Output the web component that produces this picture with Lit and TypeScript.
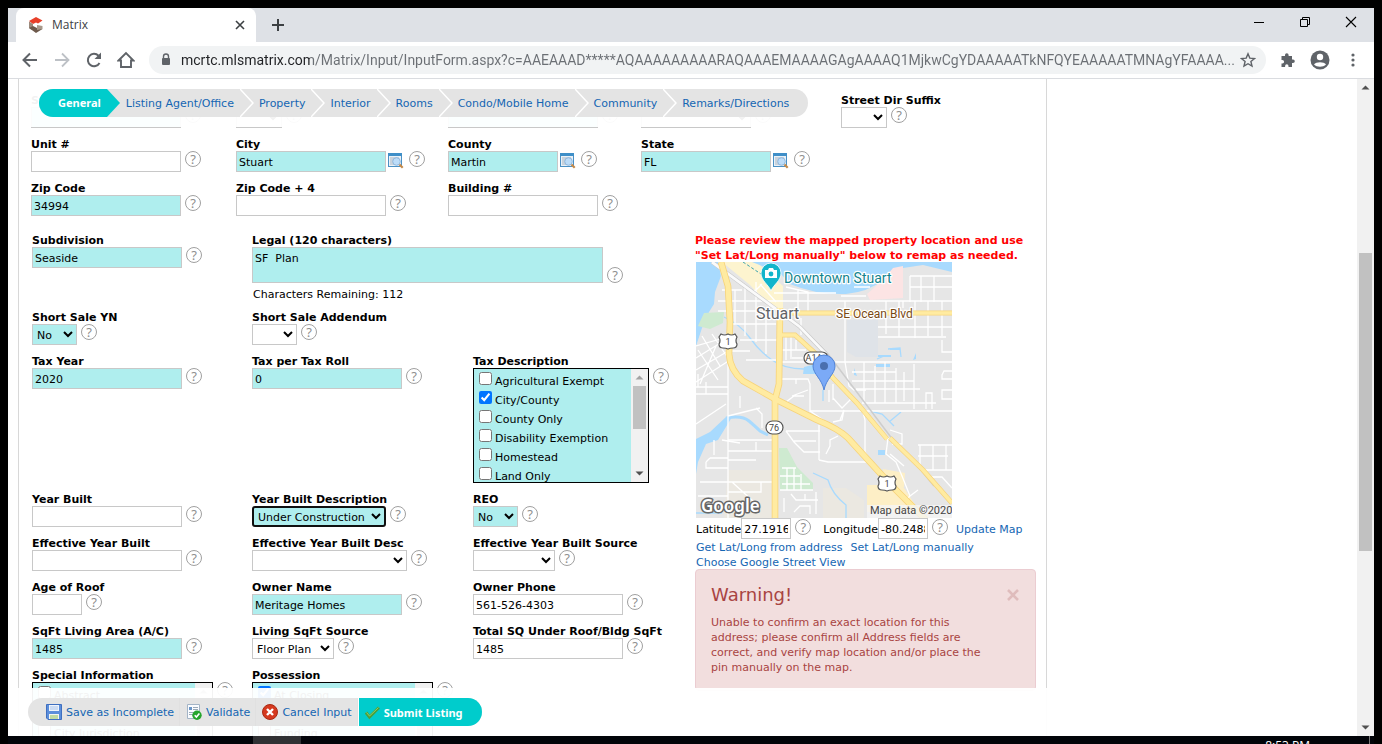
import { LitElement, html, svg, css, nothing } from "lit";
import { customElement, property } from "lit/decorators.js";
import { classMap } from "lit/directives/class-map.js";
import { styleMap } from "lit/directives/style-map.js";

type Field = {
  id: string;
  label: string;
  kind?: "text" | "select" | "area" | "list";
  value?: string;
  width: number;
  filled?: boolean;
  lookup?: boolean;
  active?: boolean;
  wide?: boolean;
  note?: string;
  items?: [string, boolean][];
};

const ADDRESS_ROWS: (Field | null)[][] = [
  [
    { id: "street-number", label: "Street Number", width: 150, filled: true },
    { id: "dir-prefix", label: "Street Dir Prefix", kind: "select", width: 46 },
    { id: "street-name", label: "Street Name", width: 150, filled: true },
    { id: "street-suffix", label: "Street Suffix", kind: "select", width: 110 },
    { id: "dir-suffix", label: "Street Dir Suffix", kind: "select", width: 46 },
  ],
  [
    { id: "unit", label: "Unit #", width: 150 },
    { id: "city", label: "City", width: 150, value: "Stuart", filled: true, lookup: true },
    { id: "county", label: "County", width: 110, value: "Martin", filled: true, lookup: true },
    { id: "state", label: "State", width: 130, value: "FL", filled: true, lookup: true },
    null,
  ],
  [
    { id: "zip", label: "Zip Code", width: 150, value: "34994", filled: true },
    { id: "zip4", label: "Zip Code + 4", width: 150 },
    { id: "building", label: "Building #", width: 150 },
    null,
    null,
  ],
];

const DETAIL_ROWS: (Field | null)[][] = [
  [
    { id: "subdivision", label: "Subdivision", width: 150, value: "Seaside", filled: true },
    {
      id: "legal", label: "Legal (120 characters)", kind: "area", width: 351, value: "SF  Plan",
      filled: true, wide: true, note: "Characters Remaining: 112",
    },
  ],
  [
    { id: "short-sale", label: "Short Sale YN", kind: "select", width: 45, value: "No", filled: true },
    { id: "short-addendum", label: "Short Sale Addendum", kind: "select", width: 45 },
    null,
  ],
  [
    { id: "tax-year", label: "Tax Year", width: 150, value: "2020", filled: true },
    { id: "tax-roll", label: "Tax per Tax Roll", width: 150, value: "0", filled: true },
    {
      id: "tax-desc", label: "Tax Description", kind: "list", width: 176,
      items: [
        ["Agricultural Exempt", false], ["City/County", true], ["County Only", false],
        ["Disability Exemption", false], ["Homestead", false], ["Land Only", false],
      ],
    },
  ],
  [
    { id: "year-built", label: "Year Built", width: 150 },
    {
      id: "year-desc", label: "Year Built Description", kind: "select", width: 134,
      value: "Under Construction", filled: true, active: true,
    },
    { id: "reo", label: "REO", kind: "select", width: 45, value: "No", filled: true },
  ],
  [
    { id: "eff-year", label: "Effective Year Built", width: 150 },
    { id: "eff-desc", label: "Effective Year Built Desc", kind: "select", width: 155 },
    { id: "eff-source", label: "Effective Year Built Source", kind: "select", width: 82 },
  ],
  [
    { id: "roof", label: "Age of Roof", width: 50 },
    { id: "owner", label: "Owner Name", width: 150, value: "Meritage Homes", filled: true },
    { id: "phone", label: "Owner Phone", width: 150, value: "561-526-4303" },
  ],
  [
    { id: "sqft", label: "SqFt Living Area (A/C)", width: 150, value: "1485", filled: true },
    { id: "sqft-source", label: "Living SqFt Source", kind: "select", width: 82, value: "Floor Plan" },
    { id: "sqft-total", label: "Total SQ Under Roof/Bldg SqFt", width: 150, value: "1485" },
  ],
  [
    {
      id: "special", label: "Special Information", kind: "list", width: 181,
      items: [["Abstract", false], ["", false], ["City Jurisdiction", false], ["", false]],
    },
    {
      id: "possession", label: "Possession", kind: "list", width: 181,
      items: [["At Closing", true], ["", false], ["Funding", false], ["", false]],
    },
    null,
  ],
];

const SECTIONS = [
  "General", "Listing Agent/Office", "Property", "Interior", "Rooms",
  "Condo/Mobile Home", "Community", "Remarks/Directions",
];

const URL_TEXT =
  "mcrtc.mlsmatrix.com/Matrix/Input/InputForm.aspx?c=AAEAAAD*****AQAAAAAAAAARAQAAAEMAAAAGAgAAAAQ1MjkwCgYDAAAAATkNFQYEAAAAATMNAgYFAAAA...";

@customElement("scroll-track")
class ScrollTrack extends LitElement {
  @property({ type: Number }) before = 0;
  @property({ type: Number }) thumb = 1;
  @property({ type: Number }) after = 1;

  static styles = css`
    :host { display: flex; flex-direction: column; flex: none; width: 17px; background: #f1f1f1; }
    svg { flex: none; width: 17px; height: 17px; fill: #505050; }
    .idle { fill: #a3a3a3; }
    .thumb { background: #c1c1c1; margin: 0 2px; }
  `;

  render() {
    return html`
      <svg class=${this.before ? "" : "idle"} viewBox="0 0 17 17"><path d="M8.500 6.500 12.500 10.500H4.500z" /></svg>
      <div style=${styleMap({ flexGrow: this.before })}></div>
      <div class="thumb" style=${styleMap({ flexGrow: this.thumb })}></div>
      <div style=${styleMap({ flexGrow: this.after })}></div>
      <svg viewBox="0 0 17 17"><path d="M8.500 10.500 12.500 6.500H4.500z" /></svg>
    `;
  }
}

@customElement("property-map")
class PropertyMap extends LitElement {
  static styles = css`
    :host { display: block; }
    svg { display: block; width: 256px; height: 256px; }
    text { font-family: Roboto, sans-serif; }
    .streets path { fill: none; stroke: #fff; stroke-width: 1.3; }
    .casing { fill: none; stroke: #f7d37a; stroke-width: 6.600; }
    .road { fill: none; stroke: #ffeba1; stroke-width: 5; }
    .thin-casing { fill: none; stroke: #f7d37a; stroke-width: 5; }
    .thin { fill: none; stroke: #ffeba1; stroke-width: 3.600; }
    .stream { fill: none; stroke: #a8dafe; stroke-width: 1.300; }
    .halo { paint-order: stroke; stroke: #fff; stroke-width: 2.500; stroke-linejoin: round; }
    .poi { fill: #12858e; font-size: 14px; }
    .town { fill: #5f6368; font-size: 16px; }
    .street { fill: #7a4a12; font-size: 12px; }
    .sign { fill: #444; font-size: 9px; text-anchor: middle; }
    .credit { fill: #444; font-size: 11px; }
    .brand {
      font-family: "Noto Sans", sans-serif; font-weight: 600; font-size: 17px; fill: #fff;
      paint-order: stroke; stroke: #666; stroke-width: 3; stroke-linejoin: round;
    }
  `;

  private main = "M25 0 32 24 34 60 33 92Q34 108 47 119L79 137 121 158Q143 167 152 176L194 222 230 258";
  private sr76 = "M84 46 83 122 79 138V256";
  private a1a = "M84 73H99L121 93 137 116 161 141 191 177M194 176 227 208 256 241";

  render() {
    const shield = (x: number, y: number) => svg`
      <path d="M${x - 7} ${y - 7}q3.500 2 7 0q3.500 2 7 0l2 3q-2 4 0 7q0 4-4 4q-3 0-5 1q-2-1-5-1q-4 0-4-4q2-3 0-7z"
        fill="#fff" stroke="#555" stroke-width="1.200" />
      <text class="sign" x=${x} y=${y + 4}>1</text>`;
    return html`
      <svg viewBox="0 0 256 256" role="img" aria-label="Map of Stuart">
        <rect width="256" height="256" fill="#e6e6e6" />
        <path d="M32 208H77V256H28zM127 226H150L168 238V256H127z" fill="#ebe8e1" />
        <path d="M171 223H206L224 250H171zM187 207 209 211 208 225 190 222z" fill="#fdefc6" />
        <path d="M151 58H182V95H160L151 90z" fill="#dfe3e8" />
        <path d="M26 0H60L87 24V48H77L54 23z" fill="#fdf4cf" />
        <path d="M0 0H22L25 14 19 30 18 42 13 50 6 66 0 84z" fill="#a8dafe" />
        <path d="M56 0 84 11 94 22Q120 33 150 32Q172 30 187 18L207 6 227 3 256 10V0z" fill="#a8dafe" />
        <path d="M171 32 187 18 197 6 207 4V36L174 38z" fill="#fce4e4" />
        <path d="M8 51 28 50 27 61 14 67 2 64z" fill="#ceead0" />
        <path d="M83 186H91L101 205 117 221V228H84z" fill="#ceead0" />
        <path d="M0 177 14 170 30 155 36 155 22 178 10 182 2 200 0 212z" fill="#a8dafe" />
        <path d="M30 156Q46 153 53 159T64 169L72 173" fill="none" stroke="#a8dafe" stroke-width="3" />
        <path d="M108 105 124 101V112L107 112z" fill="#a8dafe" />
        <path class="stream" d="M28 55Q44 62 54 76T76 98Q88 107 108 107M127 128V139M174 149 186 152 198 164M193 160 205 150M117 211 132 218Q136 232 150 243V256M181 97 188 94M192 87 204 86 205 95M0 251H26" />
        <path d="M182 93h13v2h-13zM194 86h10v2h-10zM180 102h14v3h-14zM217 98l3-7v6zM158 106l3 8-3-1zM182 188h7v5h-7z" fill="#a8dafe" />
        <path d="M47 0 65 12 78 10" fill="none" stroke="#3aa2ad" stroke-width="1" stroke-dasharray="3 2" />
        <g class="streets">
          <path d="M26 28H46M22 39H256M22 49H60M36 62H80M44 78H82M34 89H54M50 98H80M39 28V62M49 22V74M60 39V80M70 48V92M60 20V40M58 30 66 22" />
          <path d="M58 28 74 44M64 22 80 40M90 25 112 30V50M102 28V48M78 31H140M90 73V98M96 96H110M105 56V73M95 73V97M84 88H110M100 78V88" />
          <path d="M0 84 28 76M0 96 26 80M0 108 34 88M0 120 34 98M6 74 24 104M2 88 22 118M16 72 32 96M4 122 20 84" />
          <path d="M149 39V100L153 124 158 128H170M158 25H174M145 34H170M214 14V40M225 14V40M238 14V40M214 14H256M214 25H256M207 46V39M190 39V72M203 39V75M219 39V76M232 39V74M246 39V74" />
          <path d="M182 65H256M182 75H250M84 100H256M156 110H200M156 119H218M160 127H224M166 141H240M114 149H256M168 100V141M179 104V141M189 100V141M200 106V141M208 110V139M218 102V147" />
          <path d="M256 109H248L246 113V117H256M256 128H246V137H256M230 147V131H236V147M246 78V90H256M137 136 146 146 156 136M133 128V140M137 122V138" />
          <path d="M32 92V256M0 125H32M0 132H32M2 125V112M10 132V120M0 162 30 142M44 134V146M32 154 64 146M60 146 66 152V166M32 178H77M32 189H78M18 193V178M60 180V189" />
          <path d="M26 178 44 181M14 196H32M10 200 14 196M10 200V206H32M4 220H77M32 230H65V220M36 220 58 240M2 234H32M32 198H60" />
          <path d="M84 117H112L114 122V150M90 140 98 134H108M100 122V117M96 134 112 128M114 149 130 160M123 163V198M90 169H124M90 169 98 180 108 190H124M98 179H120M130 192 134 184V178L142 174M123 198 132 200H170" />
          <path d="M167 150 169 158V190L174 198M137 160 146 158 148 148 144 158M86 206H100M84 214H104M86 222H114M91 206V228M98 206V228M105 212V228M84 228H117M95 232 100 238H122M88 236V250M109 238V232M120 230V252M98 250 104 244H114V252" />
          <path d="M192 176 190 192 200 200 206 214 214 234M194 168 206 172V182H196M222 183H256M222 194H252M224 208H256M224 183V208M237 183V208M250 183V208M194 192 208 204M236 215H246L256 226M214 234 208 240M214 234 222 228" />
        </g>
        <path d="M104 64 132 92 194 174 224 207 238 224" fill="none" stroke="#cdcdcd" stroke-width="1.500" />
        <path d="M16 0 84 50 104 65 130 92" fill="none" stroke="#c9c9c9" stroke-width="4" />
        <path d="M16 0 84 50 104 65 130 92" fill="none" stroke="#fafafa" stroke-width="2.800" />
        <path class="thin-casing" d="M85 51H256" />
        <path class="thin-casing" d=${this.a1a} />
        <path class="casing" d=${this.sr76} />
        <path class="casing" d=${this.main} />
        <path class="thin" d="M85 51H256" />
        <path class="thin" d=${this.a1a} />
        <path class="road" d=${this.sr76} />
        <path class="road" d=${this.main} />
        ${shield(32, 79)} ${shield(191, 221)}
        <rect x="70" y="159" width="17" height="13" rx="6.500" fill="#fff" stroke="#555" stroke-width="1.200" />
        <text class="sign" x="78" y="169">76</text>
        <rect x="108" y="90" width="24" height="12" rx="6" fill="#fff" stroke="#555" stroke-width="1.200" />
        <text class="sign" x="118" y="99">A1A</text>
        <path d="M75 29C73 23 65 19 65 11a10 10 0 0 1 20 0C85 19 77 23 75 29z" fill="#12b5cb" stroke="#fff" stroke-width=".8" />
        <path d="M69 8h3l1-2h4l1 2h3v8H69z" fill="#fff" /><circle cx="75" cy="12" r="2.400" fill="#12b5cb" />
        <path d="M128 128C126 117 117 112 117 104a11 11 0 0 1 22 0C139 112 130 117 128 128z" fill="#7baaf7" stroke="#5184d8" stroke-width="1" />
        <circle cx="128" cy="104" r="4" fill="#4a6fae" />
        <text class="poi halo" x="88" y="21">Downtown Stuart</text>
        <text class="town halo" x="60" y="57">Stuart</text>
        <text class="street halo" x="140" y="56">SE Ocean Blvd</text>
        <rect x="171" y="243" width="85" height="13" fill="#f5f5f5" opacity=".8" />
        <text class="credit" x="174" y="252">Map data ©2020</text>
        <text class="brand" x="5" y="250">Google</text>
      </svg>
    `;
  }
}

@customElement("app-root")
class AppRoot extends LitElement {
  static styles = css`
    :host {
      display: flex; flex-direction: column; box-sizing: border-box; height: 100vh;
      padding: 8px 8px 0; background: #000; color: #000;
      font: 11px/14px "DejaVu Sans", sans-serif;
    }
    *, *::before { box-sizing: border-box; }
    button { font: inherit; color: inherit; background: none; border: 0; padding: 0; }
    a { color: #1566b3; text-decoration: none; }
    svg { display: block; flex: none; }

    .window { flex: 1; min-height: 0; display: flex; flex-direction: column; background: #fff; }
    .tabs { display: flex; align-items: stretch; height: 34px; padding-left: 8px; background: #dee1e6; }
    .tab {
      display: flex; align-items: center; width: 240px; padding: 0 11px 0 12px; gap: 8px;
      background: #fff; border-radius: 8px 8px 0 0; color: #3c4043; font: 12px/16px "Open Sans", sans-serif;
    }
    .tab-title { flex: 1; }
    .new-tab { padding: 0 15px; }
    .controls { display: flex; align-items: center; gap: 34px; margin-left: auto; padding: 0 17px 6px 0; }

    .toolbar {
      display: flex; align-items: center; height: 37px; padding: 0 12px 0 13px; gap: 14px;
      border-bottom: 1px solid #dadce0;
    }
    .toolbar button { flex: none; }
    .address {
      flex: 1; min-width: 0; display: flex; align-items: center; height: 28px; gap: 8px;
      padding: 0 10px 0 10px; border-radius: 14px; background: #f1f3f4;
    }
    .address input {
      flex: 1; min-width: 0; margin-right: -8px; border: 0; padding: 0; outline: 0;
      font: 14px/20px Roboto, sans-serif; color: transparent;
      background: linear-gradient(90deg, #202124 129px, #6b6f74 129px); background-clip: text;
      -webkit-background-clip: text;
    }
    .tools { display: flex; align-items: center; gap: 14px; }

    .body { flex: 1; min-height: 0; display: flex; }
    .view { flex: 1; min-width: 0; position: relative; overflow: hidden; padding-left: 10px; }
    .panel {
      max-width: 1029px; padding: 14px 10px 0 12px;
      border: solid #d8d8d8; border-width: 0 1px;
    }

    .overlay { position: absolute; background: rgba(255, 255, 255, 0.95); }
    .overlay-top { top: 0; left: 20px; padding: 10px 11px; }
    .overlay-bottom { left: 0; right: 0; bottom: 0; padding: 10px 20px; }
    .strong { font-family: "Noto Sans", sans-serif; font-weight: bold; color: #fff; line-height: 27px; }
    .steps { display: flex; height: 28px; border-radius: 14px; overflow: hidden; background: #e4e4e4; line-height: 29px; }
    .steps a { display: flex; padding-left: 5px; }
    .steps a:last-child { padding-right: 13px; }
    .steps .step-text { padding-right: 6px; }
    .steps .current { padding-left: 0; }
    .current .step-text { background: #00cccc; padding: 0 6px 0 19px; height: 28px; }
    .chevron { width: 14px; height: 28px; }

    .actions { display: flex; width: max-content; height: 28px; border-radius: 14px; overflow: hidden; background: #e4e4e4; line-height: 29px; }
    .actions button { display: flex; align-items: center; gap: 4px; padding: 0 5px 0 6px; color: #1566b3; border-right: 1px solid #e0e0e0; }
    .actions button:first-child { padding-left: 18px; }
    .actions .submit { background: #00cccc; color: #fff; padding: 0 19px 0 6px; border: 0; border-left: 1px solid #fff; line-height: 27px; }

    .address-grid { display: grid; grid-template-columns: 205px 212px 193px 200px 1fr; row-gap: 9px; }
    .details { display: flex; margin-top: 17px; padding-left: 1px; }
    .detail-grid { display: grid; grid-template-columns: 220px 221px 222px; row-gap: 9px; align-content: start; }
    .wide { grid-column: span 2; }

    .caption { display: block; height: 14px; line-height: 16px; font-weight: bold; white-space: nowrap; }
    .line { display: flex; align-items: flex-start; gap: 4px; }
    .line .lookup { margin: 1px 1px 0 -3px; }
    .help {
      flex: none; width: 16px; height: 16px; border: 1px solid #a0a0a0; border-radius: 50%;
      color: #8f8f8f; font: 13px/14px "Noto Sans", sans-serif; text-align: center;
    }
    .help-low { align-self: flex-end; }
    .box {
      flex: none; height: 21px; margin: 0; padding: 1px 2px 0; border: 1px solid #c8c8c8; border-radius: 0;
      background-color: #fff; color: #000; font: inherit; outline: 0;
    }
    select.box { padding: 1px 0 0; }
    textarea.box { height: 36px; padding: 4px 2px; resize: none; overflow: hidden; }
    .filled { background-color: #afeeee; }
    .active { border: 2px solid #101010; border-radius: 3px; }
    .note { padding: 5px 1px 0; height: 18px; }

    .list { display: flex; height: 115px; border: 1px solid #000; background: #afeeee; }
    .options { flex: 1; overflow: hidden; }
    .options label { display: flex; height: 19px; line-height: 25px; white-space: nowrap; }
    .options input { flex: none; width: 13px; height: 13px; margin: 3px 3px 3px 5px; }

    .map-side { width: 341px; line-height: 15px; }
    .map-side property-map { margin-left: 1px; }
    .notice { margin: 0; height: 29px; color: #f00; font-weight: bold; white-space: nowrap; }
    .coords { display: flex; align-items: flex-start; height: 21px; padding-left: 1px; line-height: 23px; }
    .coords .box { width: 50px; }
    .coords .help { margin: 1px 12px 0 4px; }
    .coords .help:last-of-type { margin-right: 8px; }
    .links { display: flex; flex-wrap: wrap; column-gap: 8px; height: 30px; padding: 1px 0 0 1px; }
    .alert {
      padding: 15px 50px 15px 15px; border: 1px solid #ebccd1; border-radius: 4px;
      background: #f2dede; color: #a94442;
    }
    .alert-head { display: flex; align-items: center; justify-content: space-between; margin: 0 -35px 10px 0; }
    .alert h4 { margin: 0; font-weight: normal; font-size: 18px; line-height: 20px; }
    .alert p { margin: 0; }

    .taskbar { display: flex; justify-content: flex-end; height: 8px; overflow: hidden; background: #020409; }
    .thumb { width: 48px; margin-left: 245px; margin-right: auto; background: #303134; }
    .clock { padding: 2px 59px 0 0; margin-right: 4px; border-right: 1px solid #777; color: #fff; font: 12px/16px "Open Sans", sans-serif; }
  `;

  private caption(f: Field) {
    return f.kind === "list"
      ? html`<span class="caption" id=${f.id}>${f.label}</span>`
      : html`<label class="caption" for=${f.id}>${f.label}</label>`;
  }

  private control(f: Field) {
    const cls = classMap({ box: true, filled: !!f.filled, active: !!f.active });
    const size = styleMap({ width: `${f.width}px` });
    switch (f.kind) {
      case "select":
        return html`<select id=${f.id} class=${cls} style=${size}><option>${f.value ?? ""}</option></select>`;
      case "area":
        return html`<textarea id=${f.id} class=${cls} style=${size} .value=${f.value ?? ""}></textarea>`;
      case "list":
        return html`
          <div class="list" role="group" aria-labelledby=${f.id} style=${size}>
            <div class="options">
              ${f.items!.map(([text, on]) => html`<label><input type="checkbox" .checked=${on} />${text}</label>`)}
            </div>
            <scroll-track .before=${0} .thumb=${43} .after=${36}></scroll-track>
          </div>`;
      default:
        return html`<input type="text" id=${f.id} class=${cls} style=${size} .value=${f.value ?? ""} />`;
    }
  }

  private lookup(label: string) {
    return html`
      <button class="lookup" aria-label="Look up ${label}">
        <svg width="17" height="17" viewBox="0 0 17 17">
          <rect x="1.500" y="1.500" width="13" height="13" fill="#e9f1f8" stroke="#4a90c4" />
          <path d="M1 1h14v3H1z" fill="#3f8fc8" />
          <path d="M3 6h9M3 8h3M3 10h3M3 12h4" stroke="#a9b4bf" />
          <circle cx="9.500" cy="9.500" r="3.800" fill="#bcdcf8" stroke="#8fb6dc" />
          <path d="m12.500 12.500 3.200 3.200" stroke="#c58a4a" stroke-width="2.200" />
        </svg>
      </button>`;
  }

  private field(f: Field | null) {
    if (!f) return html`<div></div>`;
    return html`
      <div class=${f.wide ? "wide" : ""}>
        ${this.caption(f)}
        <div class="line">
          ${this.control(f)} ${f.lookup ? this.lookup(f.label) : nothing}
          <button class=${classMap({ help: true, "help-low": f.kind === "area" })} aria-label="Help: ${f.label}">?</button>
        </div>
        ${f.note ? html`<div class="note">${f.note}</div>` : nothing}
      </div>`;
  }

  private chrome() {
    return html`
      <div class="tabs">
        <div class="tab">
          <svg width="16" height="16" viewBox="0 0 16 16">
            <path d="M1 4 8 0l6.500 3.500L10 6.500 8 5.500 5 7z" fill="#e8402a" />
            <path d="M1 4.500 5 7v4l-1 2-3-2z" fill="#9b8a7c" />
            <path d="M1 11 5 9l4 2 5.500 1L8 16z" fill="#6e5a4c" />
            <path d="M9 8 14.500 9V12L9 13z" fill="#a8998b" />
          </svg>
          <span class="tab-title">Matrix</span>
          <button aria-label="Close tab">
            <svg width="10" height="10" viewBox="0 0 10 10"><path d="m1 1 8 8M9 1 1 9" stroke="#3c4043" stroke-width="1.600" /></svg>
          </button>
        </div>
        <button class="new-tab" aria-label="New tab">
          <svg width="14" height="14" viewBox="0 0 14 14"><path d="M7 1v12M1 7h12" stroke="#3c4043" stroke-width="2" /></svg>
        </button>
        <div class="controls">
          <button aria-label="Minimize"><svg width="12" height="12" viewBox="0 0 12 12"><path d="M1 6.500h10" stroke="#000" /></svg></button>
          <button aria-label="Restore"><svg width="12" height="12" viewBox="0 0 12 12"><path d="M1.500 3.500h7v7h-7zM3.500 3V1.500h7v7H9" fill="none" stroke="#000" /></svg></button>
          <button aria-label="Close"><svg width="12" height="12" viewBox="0 0 12 12"><path d="m1 1 10 10M11 1 1 11" stroke="#000" stroke-width="1.100" /></svg></button>
        </div>
      </div>
      <div class="toolbar">
        <button aria-label="Back"><svg width="18" height="18" viewBox="0 0 18 18"><path d="M16 9H3M9 2.500 2.500 9 9 15.500" fill="none" stroke="#5f6368" stroke-width="2" /></svg></button>
        <button aria-label="Forward"><svg width="18" height="18" viewBox="0 0 18 18"><path d="M2 9h13M9 2.500 15.500 9 9 15.500" fill="none" stroke="#bdc1c6" stroke-width="1.800" /></svg></button>
        <button aria-label="Reload"><svg width="18" height="18" viewBox="0 0 18 18"><path d="M14.500 12A6.200 6.200 0 1 1 13.500 4.700" fill="none" stroke="#5f6368" stroke-width="2" /><path d="M16 1.500V8H9.500z" fill="#5f6368" /></svg></button>
        <button aria-label="Home"><svg width="18" height="18" viewBox="0 0 18 18"><path d="M1.500 9.500 9 2l7.500 7.500H14V16H4V9.500z" fill="none" stroke="#5f6368" stroke-width="1.900" /></svg></button>
        <div class="address">
          <svg width="14" height="16" viewBox="0 0 14 16"><path d="M4.500 7V4.500a2.500 2.500 0 0 1 5 0V7" fill="none" stroke="#5f6368" stroke-width="1.400" /><rect x="3" y="6" width="8" height="7" rx="1" fill="#5f6368" /></svg>
          <input type="text" aria-label="Address" .value=${URL_TEXT} />
          <button aria-label="Bookmark"><svg width="16" height="16" viewBox="0 0 16 16"><path d="m8 1.800 1.800 4.300 4.700.4-3.600 3 1.100 4.600L8 11.700 4 14.100l1.100-4.600-3.600-3 4.700-.4z" fill="none" stroke="#5f6368" stroke-width="1.400" /></svg></button>
        </div>
        <div class="tools">
          <button aria-label="Extensions"><svg width="16" height="16" viewBox="0 0 16 16"><path d="M1.500 4H5V3a1.800 1.800 0 0 1 3.600 0v1H12v3.500h1a1.800 1.800 0 0 1 0 3.600h-1V15H8.500v-1a1.700 1.700 0 0 0-3.400 0v1H1.500v-3.500h.8a1.800 1.800 0 0 0 0-3.600h-.8z" fill="#5f6368" /></svg></button>
          <button aria-label="Profile"><svg width="20" height="20" viewBox="0 0 20 20"><circle cx="10" cy="10" r="9.500" fill="#5f6368" /><circle cx="10" cy="7" r="3.200" fill="#fff" /><path d="M4 14.500C6 11.500 14 11.500 16 14.500 13 17.500 7 17.500 4 14.500z" fill="#fff" /></svg></button>
          <button aria-label="Menu"><svg width="18" height="16" viewBox="0 0 18 16"><g fill="#5f6368"><circle cx="9" cy="3" r="1.600" /><circle cx="9" cy="8" r="1.600" /><circle cx="9" cy="13" r="1.600" /></g></svg></button>
        </div>
      </div>`;
  }

  private steps() {
    return html`
      <nav class="overlay overlay-top">
        <div class="steps">
          ${SECTIONS.map((name, i) => html`
            <a href="#" class=${i === 0 ? "current strong" : ""}>
              <span class="step-text">${name}</span>
              ${i === 0
                ? html`<svg class="chevron" viewBox="0 0 14 28"><path d="M0 0 13 14 0 28z" fill="#00cccc" /></svg>`
                : i < SECTIONS.length - 1
                  ? html`<svg class="chevron" viewBox="0 0 14 28"><path d="M0 0 13 14 0 28" fill="none" stroke="#fff" stroke-width="1.500" /></svg>`
                  : nothing}
            </a>`)}
        </div>
      </nav>`;
  }

  private actions() {
    return html`
      <div class="overlay overlay-bottom">
        <div class="actions">
          <button>
            <svg width="16" height="16" viewBox="0 0 16 16"><path d="M.5.500h15v15H2L.5 14z" fill="#5b8edb" stroke="#3f6fc0" /><path d="M3 1h10v6H3z" fill="#eef4fc" /><path d="M4 3h8M4 5h8" stroke="#a9c3ea" /><path d="M3 10h10v5H3z" fill="#f4f7ee" /><path d="M4 12h8M4 14h8" stroke="#8cbf5a" /></svg>
            Save as Incomplete
          </button>
          <button>
            <svg width="16" height="16" viewBox="0 0 16 16"><path d="M1.500.500h12v14h-12z" fill="#fafcff" stroke="#a3b4c6" /><path d="M3 3h3v3H3z" fill="#6b96c8" /><path d="M7 3.500h5M7 5.500h5M3 8.500h8M3 10.500h4" stroke="#9aa9b8" /><circle cx="11" cy="11.300" r="4.700" fill="#25a52c" /><path d="m8.700 11.300 1.700 1.800 3-3.600" fill="none" stroke="#fff" stroke-width="1.600" /></svg>
            Validate
          </button>
          <button>
            <svg width="16" height="16" viewBox="0 0 16 16"><circle cx="8" cy="8" r="7.500" fill="#d5391f" stroke="#a82a14" /><path d="m5 5 6 6M11 5l-6 6" stroke="#fff" stroke-width="2.400" /></svg>
            Cancel Input
          </button>
          <button class="submit strong">
            <svg width="15" height="16" viewBox="0 0 15 16"><path d="m1 8.500 3.500 4.500L14 3.500" fill="none" stroke="#4b9e3b" stroke-width="3" /><path d="m1.500 8.500 3 3.500 9-8.500" fill="none" stroke="#8fd06a" stroke-width="1" /></svg>
            Submit Listing
          </button>
        </div>
      </div>`;
  }

  private mapSide() {
    return html`
      <div class="map-side">
        <p class="notice">Please review the mapped property location and use<br />"Set Lat/Long manually" below to remap as needed.</p>
        <property-map></property-map>
        <div class="coords">
          <label for="lat">Latitude</label>
          <input class="box" id="lat" type="text" .value=${"27.1916"} />
          <button class="help" aria-label="Help: Latitude">?</button>
          <label for="lng">Longitude</label>
          <input class="box" id="lng" type="text" .value=${"-80.2488"} />
          <button class="help" aria-label="Help: Longitude">?</button>
          <a href="#">Update Map</a>
        </div>
        <div class="links">
          <a href="#">Get Lat/Long from address</a>
          <a href="#">Set Lat/Long manually</a>
          <a href="#">Choose Google Street View</a>
        </div>
        <div class="alert" role="alert">
          <div class="alert-head">
            <h4>Warning!</h4>
            <button aria-label="Dismiss"><svg width="14" height="14" viewBox="0 0 14 14"><path d="m2 2 10 10M12 2 2 12" stroke="#dfbcbc" stroke-width="2.600" /></svg></button>
          </div>
          <p>Unable to confirm an exact location for this address; please confirm all Address fields are correct, and verify map location and/or place the pin manually on the map.</p>
        </div>
      </div>`;
  }

  render() {
    return html`
      <div class="window">
        ${this.chrome()}
        <div class="body">
          <div class="view">
            <div class="panel">
              <div class="address-grid">${ADDRESS_ROWS.flat().map((f) => this.field(f))}</div>
              <div class="details">
                <div class="detail-grid">${DETAIL_ROWS.flat().map((f) => this.field(f))}</div>
                ${this.mapSide()}
              </div>
            </div>
            ${this.steps()} ${this.actions()}
          </div>
          <scroll-track .before=${157} .thumb=${298} .after=${168}></scroll-track>
        </div>
      </div>
      <div class="taskbar"><div class="thumb"></div><div class="clock">8:53 PM</div></div>
    `;
  }
}
